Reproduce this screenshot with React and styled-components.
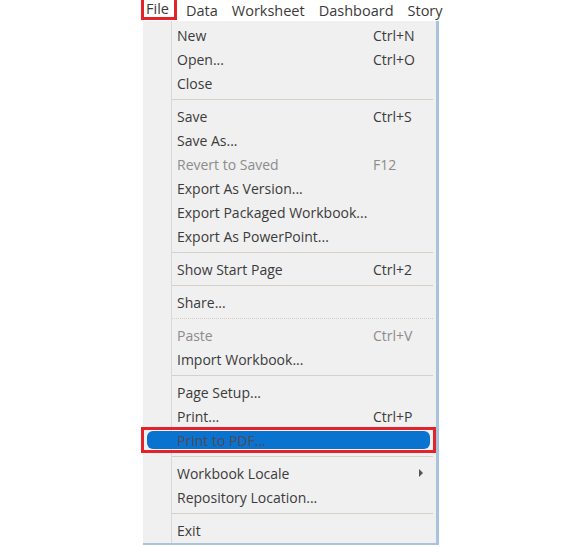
import React from "react";
import styled, { createGlobalStyle } from "styled-components";

const Global = createGlobalStyle`
  html, body { margin: 0; padding: 0; background: #ffffff; }
  body { font-family: "Open Sans", "Noto Sans", "DejaVu Sans", sans-serif; }
`;

const Page = styled.div`
  width: 585px;
  height: 547px;
  overflow: hidden;
  background: #ffffff;
  padding-left: 141px;
  box-sizing: border-box;
`;

const MenuBar = styled.div`
  display: flex;
  align-items: center;
  height: 20px;
  width: 302px;
  overflow: hidden;
  white-space: nowrap;
  font-size: 14.5px;
  color: #3a3a3a;
  gap: 14px;
`;

const BarItem = styled.span`
  display: inline-flex;
  align-items: center;
  height: 20px;
  box-sizing: border-box;
  padding: ${(p) => (p.$boxed ? "0 5px 0 2px" : "0")};
  border: ${(p) => (p.$boxed ? "3px solid #e3222a" : "none")};
  border-top: none;
  margin-right: ${(p) => (p.$boxed ? "-5px" : "0")};
`;

const Menu = styled.div`
  margin-top: 1px;
  margin-left: 2px;
  width: 296px;
  height: 524px;
  box-sizing: border-box;
  background: #f0f0f0;
  border-right: 3px solid #a9c3dd;
  border-bottom: 2px solid #a9c3dd;
  padding-top: 2px;
  position: relative;
  background-image: linear-gradient(#d9d9d9, #d9d9d9);
  background-repeat: no-repeat;
  background-size: 1px 100%;
  background-position: 28px 0;
  font-size: 14px;
`;

const Row = styled.div`
  position: relative;
  display: flex;
  align-items: center;
  height: 24px;
  padding-left: 34px;
  color: ${(p) => (p.$disabled ? "#8c8c8c" : "#3b3b3b")};
  white-space: nowrap;

  ${(p) =>
    p.$highlight &&
    `
    color: #4f4a57;
    &::before {
      content: "";
      position: absolute;
      left: 4px;
      right: 6px;
      top: 3px;
      bottom: 3px;
      background: #0a72cf;
      border-radius: 6px;
    }
    &::after {
      content: "";
      position: absolute;
      left: -2px;
      right: 0px;
      top: -1px;
      bottom: -1px;
      border: 3px solid #e3222a;
    }
  `}
`;

const Label = styled.span`
  position: relative;
  z-index: 1;
  width: 196px;
`;

const Shortcut = styled.span`
  position: relative;
  z-index: 1;
  flex: 1;
`;

const Arrow = styled.span`
  position: absolute;
  left: 276px;
  top: 8px;
  width: 0;
  height: 0;
  border-top: 4px solid transparent;
  border-bottom: 4px solid transparent;
  border-left: 4px solid #555;
`;

const Separator = styled.div`
  height: 9px;
  display: flex;
  align-items: center;
  padding-left: 29px;
  padding-right: 3px;

  &::after {
    content: "";
    flex: 1;
    border-top: 1px ${(p) => (p.$dotted ? "dotted" : "solid")} #d6d0c8;
  }
`;

const groups = [
  [
    { l: "New", s: "Ctrl+N" },
    { l: "Open...", s: "Ctrl+O" },
    { l: "Close" },
  ],
  [
    { l: "Save", s: "Ctrl+S" },
    { l: "Save As..." },
    { l: "Revert to Saved", s: "F12", d: true },
    { l: "Export As Version..." },
    { l: "Export Packaged Workbook..." },
    { l: "Export As PowerPoint..." },
  ],
  [{ l: "Show Start Page", s: "Ctrl+2" }],
  [{ l: "Share..." }],
  [
    { l: "Paste", s: "Ctrl+V", d: true },
    { l: "Import Workbook..." },
  ],
  [
    { l: "Page Setup..." },
    { l: "Print...", s: "Ctrl+P" },
    { l: "Print to PDF...", h: true },
  ],
  [{ l: "Workbook Locale", sub: true }, { l: "Repository Location..." }],
  [{ l: "Exit" }],
];

export default function App() {
  return (
    <>
      <Global />
      <Page>
        <MenuBar>
          <BarItem $boxed>File</BarItem>
          <BarItem>Data</BarItem>
          <BarItem>Worksheet</BarItem>
          <BarItem>Dashboard</BarItem>
          <BarItem>Story</BarItem>
        </MenuBar>
        <Menu>
          {groups.map((g, gi) => (
            <React.Fragment key={gi}>
              {gi > 0 && <Separator $dotted={gi === 4} />}
              {g.map((it) => (
                <Row key={it.l} $disabled={it.d} $highlight={it.h}>
                  <Label>{it.l}</Label>
                  {it.s && <Shortcut>{it.s}</Shortcut>}
                  {it.sub && <Arrow />}
                </Row>
              ))}
            </React.Fragment>
          ))}
        </Menu>
      </Page>
    </>
  );
}
